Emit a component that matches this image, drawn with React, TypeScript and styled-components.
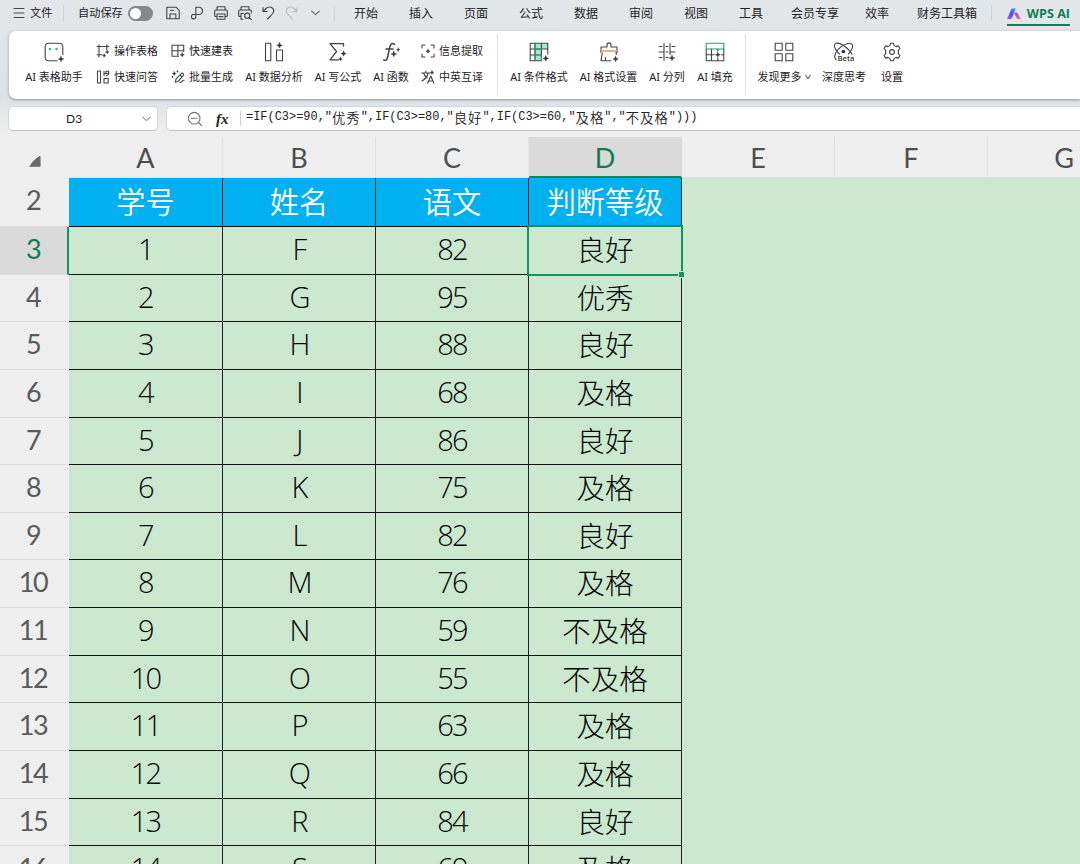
import React from 'react';
import styled, { createGlobalStyle } from 'styled-components';

const GlobalStyle = createGlobalStyle`
  * { box-sizing: border-box; }
  body {
    margin: 0;
    overflow: hidden;
    background: #efefef;
    font-family: "Noto Sans", "Noto Sans CJK SC", sans-serif;
    color: #1f2226;
  }
`;

const Window = styled.div`
  width: 1080px;
  height: 864px;
  overflow: hidden;
  display: flex;
  flex-direction: column;
  background: #efefef;
`;

const Chrome = styled.header`
  flex: none;
  height: 137px;
  background: linear-gradient(#e3e7ea 0, #dfe3e6 100px, #efefef 134px);
`;

const MenuBar = styled.nav`
  display: flex;
  align-items: center;
  height: 31px;
  padding: 0 0 5px 13px;
  white-space: nowrap;
`;

const Spacer = styled.span<{ $w: number }>`
  flex: none;
  width: ${(p) => p.$w}px;
`;

const MenuText = styled.span<{ $w: number; $size?: number }>`
  flex: none;
  width: ${(p) => p.$w}px;
  padding-top: ${(p) => (p.$size ? 0 : 2)}px;
  font-size: ${(p) => p.$size ?? 12}px;
  line-height: 16px;
`;

const Toggle = styled.span`
  flex: none;
  width: 25px;
  height: 15px;
  padding: 2px;
  border-radius: 8px;
  background: #85888b;
`;

const Knob = styled.span`
  display: block;
  width: 11px;
  height: 11px;
  border-radius: 50%;
  background: #fff;
`;

const Divider = styled.span<{ $h: number }>`
  flex: none;
  width: 1px;
  height: ${(p) => p.$h}px;
  background: #cdd1d4;
`;

const AiTab = styled.span`
  flex: none;
  display: flex;
  align-items: center;
  justify-content: space-between;
  width: 63px;
  height: 22px;
  margin-top: 4px;
  border-bottom: 2px solid #0f7f56;
  color: #0f7f56;
  font: bold 12.6px/18px "Open Sans", sans-serif;
`;

const Ribbon = styled.section`
  display: flex;
  align-items: flex-start;
  height: 68px;
  margin-left: 9px;
  padding: 11px 0 0 11px;
  background: #fff;
  border-radius: 7px 0 0 7px;
  box-shadow: 0 1px 3px rgba(60, 70, 80, 0.5);
  font-size: 11px;
  line-height: 14px;
  white-space: nowrap;
`;

const BigButton = styled.div<{ $w: number }>`
  flex: none;
  width: ${(p) => p.$w}px;
  height: 42px;
  display: flex;
  flex-direction: column;
  align-items: center;
  justify-content: space-between;
`;

const ButtonLabel = styled.span`
  display: flex;
  align-items: center;
  white-space: pre;
`;

const ButtonStack = styled.div<{ $w: number }>`
  flex: none;
  width: ${(p) => p.$w}px;
  display: flex;
  flex-direction: column;
  gap: 12px;
  padding-top: 2px;
`;

const SmallButton = styled.div`
  display: flex;
  align-items: center;
  gap: 4px;
  height: 14px;
`;

const GroupLine = styled.div<{ $ml: number; $mr: number }>`
  flex: none;
  width: 1px;
  height: 61px;
  margin: -8px ${(p) => p.$mr}px 0 ${(p) => p.$ml}px;
  background: #dcdcdc;
`;

const FormulaRow = styled.section`
  display: flex;
  gap: 8px;
  margin: 7px 0 0 8px;
  height: 25px;
`;

const NameBox = styled.div`
  display: flex;
  align-items: center;
  width: 150px;
  padding: 0 6px 0 57px;
  justify-content: space-between;
  background: #fff;
  border-radius: 5px;
  border: 1px solid #d3d6d8;
  border-bottom-color: #bfc1c3;
  font: 12px Lato, sans-serif;
`;

const FormulaBox = styled.div`
  flex: 1;
  display: flex;
  align-items: center;
  padding-left: 20px;
  background: #fff;
  border-radius: 5px 0 0 5px;
  border: 1px solid #d3d6d8;
  border-right: 0;
  border-bottom-color: #bfc1c3;
`;

const FxLabel = styled.span`
  width: 25px;
  padding-left: 1px;
  font: italic bold 15px/18px "Liberation Serif", serif;
`;

const Formula = styled.code`
  display: flex;
  align-items: center;
  margin-left: 5px;
  height: 20px;
  padding-bottom: 3px;
  font: 11.95px/20px "Liberation Mono", monospace;
  color: #222;
  white-space: pre;
`;

const FormulaHan = styled.span`
  font: 350 13.4px/18px "Noto Sans CJK SC", sans-serif;
  letter-spacing: 0.94px;
`;

const Sheet = styled.main`
  flex: 1;
  min-height: 0;
  display: flex;
  flex-direction: column;
  background: #cce8cf;
`;

const Line = styled.div<{ $h: number }>`
  flex: none;
  display: flex;
  height: ${(p) => p.$h}px;
`;

const Corner = styled.div`
  flex: none;
  width: 69px;
  padding: 13px 0 0 29px;
  background: #efefef;
`;

const ColumnHead = styled.div<{ $active: boolean }>`
  flex: none;
  width: 153px;
  border-right: 1px solid ${(p) => (p.$active ? '#dadada' : '#e2e2e2')};
  border-bottom: ${(p) => (p.$active ? '2px solid #12855b' : '1px solid #dfe3df')};
  background: ${(p) => (p.$active ? '#dadada' : '#efefef')};
  color: ${(p) => (p.$active ? '#107c52' : '#4d4f51')};
  font: 27px/42px Lato, sans-serif;
  text-align: center;

  &:nth-child(2) { width: 154px; }
`;

const RowHead = styled.div<{ $active: boolean }>`
  flex: none;
  width: 69px;
  padding-right: ${(p) => (p.$active ? 1 : 3)}px;
  background: ${(p) => (p.$active ? '#dadada' : '#efefef')};
  border-right: ${(p) => (p.$active ? '2px solid #179065' : '0')};
  border-bottom: 1px solid #dedede;
  color: ${(p) => (p.$active ? '#107c52' : '#5a5b5d')};
  font: 27px/44px Lato, sans-serif;
  letter-spacing: -1.5px;
  text-align: center;
`;

const Cell = styled.div<{ $title?: boolean }>`
  position: relative;
  flex: none;
  width: 153px;
  border-right: 1px solid #1c241e;
  border-bottom: 1px solid #111;
  background: ${(p) => (p.$title ? '#00b0f0' : '#cce8cf')};
  color: ${(p) => (p.$title ? '#fff' : '#050505')};
  font: ${(p) => (p.$title ? '350 29px/44px' : '300 29px/44px')} "Open Sans", "Noto Sans CJK SC", sans-serif;
  letter-spacing: ${(p) => (p.$title ? 0 : '-1.8px')};
  text-align: center;

  &:nth-child(2) { width: 154px; }
`;

const HanText = styled.span`
  font-family: "Noto Sans CJK SC", sans-serif;
  font-size: 28.6px;
  letter-spacing: 0;
`;

const TitleText = styled(HanText)`
  font-size: 29.2px;
`;

const Selection = styled.i`
  position: absolute;
  z-index: 1;
  inset: -2px;
  border: 2px solid #179065;
`;

const FillHandle = styled.i`
  position: absolute;
  z-index: 2;
  right: -4px;
  bottom: -4px;
  width: 7px;
  height: 7px;
  background: #179065;
  border: 1px solid #cce8cf;
`;

const Svg = ({ w, h, children, c = '#404347', sw = 1.1 }: {
  w: number; h: number; children: React.ReactNode; c?: string; sw?: number;
}) => (
  <svg width={w} height={h} viewBox={`0 0 ${w} ${h}`} fill="none" stroke={c} strokeWidth={sw}
    strokeLinecap="round" strokeLinejoin="round">
    {children}
  </svg>
);

const Spark = ({ x, y, r = 2.8 }: { x: number; y: number; r?: number }) => (
  <path
    d={`M${x} ${y - r}L${x + r * 0.3} ${y - r * 0.3}L${x + r} ${y}L${x + r * 0.3} ${y + r * 0.3}L${x} ${y + r}L${x - r * 0.3} ${y + r * 0.3}L${x - r} ${y}L${x - r * 0.3} ${y - r * 0.3}Z`}
    fill="#333" stroke="#333" strokeWidth="0.4"
  />
);

const Chevron = ({ w = 8, c = '#666' }: { w?: number; c?: string }) => (
  <Svg w={w} h={6} c={c}><path d={`M.7 1.2L${w / 2} 4.6L${w - 0.7} 1.2`} /></Svg>
);

const quickIcons = [
  <Svg w={14} h={14}><path d="M3 12.8H.8V1.2H10L13.2 4.4V12.8H3M4 12.5V8H9.8V12.5M4.5 4.2H7.5" /></Svg>,
  <Svg w={14} h={14}><path d="M5.8 8.5V1.2H9a3.6 3.6 0 0 1 0 7.3H3.3a2.2 2.2 0 1 0 2.5 2.3V8.5" /></Svg>,
  <Svg w={14} h={14}><path d="M3 4V.8H11V4M3 10.5H1.5Q.7 10.5 .7 9.5V5Q.7 4 1.7 4H12.3Q13.3 4 13.3 5V9.5Q13.3 10.5 12.5 10.5H11M3 8H11V13.2H3ZM5 10.6H9" /></Svg>,
  <Svg w={14} h={14}><path d="M3 4V.8H11V4M3 10.5H1.5Q.7 10.5 .7 9.5V5Q.7 4 1.7 4H12.3Q13.3 4 13.3 5V7M5 13.2H3V7.5H5.5M11 11.7L13.3 13.5" /><circle cx="9.2" cy="9.7" r="2.6" /></Svg>,
  <Svg w={13} h={14}><path d="M1 1.5V5.5H5.2M1.3 5.2L4 2.5C7-.3 11.7 1 11.7 5C11.7 7 10.7 8.2 5.5 13" /></Svg>,
  <Svg w={13} h={14} c="#b9bdc0"><path d="M12 1.5V5.5H7.8M11.7 5.2L9 2.5C6-.3 1.3 1 1.3 5C1.3 7 2.3 8.2 7.5 13" /></Svg>,
];

const AssistantIcon = () => (
  <Svg w={20} h={20}>
    <path d="M13 18.8H5Q1.2 18.8 1.2 15V5Q1.2 1.2 5 1.2H15Q18.8 1.2 18.8 5V12.5" />
    <circle cx="6" cy="7" r="1.3" fill="#48ad8a" stroke="none" />
    <circle cx="12.5" cy="7" r="1.3" fill="#48ad8a" stroke="none" />
    <Spark x={17} y={17} />
  </Svg>
);
const EditTableIcon = () => (
  <Svg w={14} h={14}><path d="M3 .8V13M1 2.5H13M10.8.8V5.5M1 10.8H6" /><Spark x={11.2} y={8} r={1.9} /><Spark x={8.2} y={11.6} r={1.7} /></Svg>
);
const AskIcon = () => (
  <Svg w={14} h={14}><path d="M1.5 1H4.5V13H1.5ZM8 8.5H12.2V13H8ZM8 1.2V5.8M8 3.5H10M12.7 3.5Q12.7 5 10.2 5.8M10 1.2H12.7V3.5H10Z" /></Svg>
);
const NewTableIcon = () => (
  <Svg w={14} h={14}><path d="M7.5 12.2H1V1.2H12.7V7.5M1 6.7H12.7M6.9 1.2V12.2" /><Spark x={11.2} y={10.8} r={2.1} /></Svg>
);
const BatchIcon = () => (
  <Svg w={14} h={14}><path d="M4.3 12.3L5 9.2L10.2 3.5Q11.2 2.7 12.2 3.6Q13.1 4.6 12.2 5.6L7 11.4ZM9 4.8L11 6.8M8.8 12.7C11 12.7 11 10.2 13 10.2" /><Spark x={3.2} y={3.6} r={1.9} /><Spark x={1.4} y={7} r={0.9} /><Spark x={6.5} y={1.5} r={0.9} /></Svg>
);
const AnalyzeIcon = () => (
  <Svg w={20} h={20}><path d="M1.5 1.2H6.8V18.8H1.5ZM12.5 8H18.5V18.8H12.5Z" /><Spark x={15.5} y={3.3} /></Svg>
);
const SumIcon = () => (
  <Svg w={20} h={20} sw={1.3}><path d="M15.5 4V1.7H2L8.5 9.5L2 17.8H10.5" /><Spark x={15.6} y={11.6} r={2.6} /><Spark x={12.5} y={17} r={1.9} /></Svg>
);
const FunctionIcon = () => (
  <Svg w={20} h={20} sw={1.5}><path d="M13.5 2.4C10.6.4 9.3 2.5 8.7 5.3L6.5 15.5Q5.6 19.3 2.7 18M5 7H12" /><Spark x={12.8} y={12} r={2.8} /><Spark x={17.2} y={7.7} r={1.8} /></Svg>
);
const ExtractIcon = () => (
  <Svg w={14} h={14}><path d="M1 4V1H4M10 1H13V4M13 10V13H10M4 13H1V10" /><Spark x={7} y={7.2} r={2.1} /></Svg>
);
const TranslateIcon = () => (
  <Svg w={14} h={14}><path d="M.8 3H8.8M4.8 1V3M7.3 3Q6 8 1 11M2.5 3Q3.5 6.3 6.2 8M6.7 13.2L9.8 6L12.9 13.2M7.8 11H11.8" /><Spark x={11} y={2.5} r={2} /></Svg>
);
const ConditionIcon = () => (
  <Svg w={20} h={20}>
    <path d="M6 1.2H18.5V7H13V13H12V18.8H6Z" fill="#a8e6cf" stroke="none" />
    <path d="M12.5 18.8H1.2V1.2H18.8V12M1.2 7H18.8M1.2 13H12.5M6 1.2V18.8M12.4 1.2V18.8" />
    <path d="M6 1.2V18.8M6 7H12.4M12.4 13V18.8" stroke="#20a273" />
    <Spark x={16.8} y={16.4} />
  </Svg>
);
const BrushIcon = () => (
  <Svg w={20} h={20}>
    <path d="M2 10.5V5H8V3Q8 .9 10 .9Q12 .9 12 3V5H18V10.5M3.3 11L2 18.7H12M6.5 18.5V15.5M17 10.5L17.4 12.5" />
    <path d="M2.2 9H17.8" stroke="#f09061" strokeWidth="1.6" /><Spark x={16.6} y={17} />
  </Svg>
);
const SplitIcon = () => (
  <Svg w={20} h={20}><path d="M7 1.5V18.5M13 1.5V12.5M2 4.5H5M9 4.5H11M15 4.5H18M2 10H7M9 10H11M13 10H18M2 15.5H5M9 15.5H11" /><Spark x={15} y={16} /></Svg>
);
const FillIcon = () => (
  <Svg w={20} h={20}><path d="M1.2 7V18.8H18.8V7M1.2 12.8H9M6.5 7V18.8M12.8 7V9M12.8 16V18.8M16.5 12.8H18.8" /><path d="M1.2 7V1.2H18.8V7Z" stroke="#20a273" /><Spark x={12.8} y={12.8} r={2.5} /></Svg>
);
const MoreIcon = () => (
  <Svg w={20} h={20}><path d="M1.2 1.2H8.2V8.2H1.2ZM11.8 1.2H18.8V8.2H11.8ZM1.2 11.8H8.2V18.8H1.2ZM11.8 11.8H18.8V18.8H11.8Z" /></Svg>
);
const ThinkIcon = () => (
  <Svg w={22} h={20}>
    <path d="M3 18Q-.3 13.5 5 7.7Q11.5 1 17 1.2Q22 2 17.8 9Q17 10.5 15.5 12M19 12.5Q18.5 10 12 4.5Q6 .5 3 1.3Q-1 3.5 5.2 10.8L6.5 12" />
    <circle cx="10.4" cy="9.5" r="1.8" fill="#333" stroke="none" />
    <text x="4.6" y="19.3" fill="#333" stroke="none" fontFamily="Open Sans, sans-serif" fontWeight="600" fontSize="7.6">Beta</text>
  </Svg>
);
const GearIcon = () => (
  <Svg w={20} h={20}><path d="M8 3.4L8.6 1.2H11.4L12 3.4L14 4.6L16.3 3.9L18 6.5L16.4 8.3V11.7L18 13.5L16.3 16.1L14 15.4L12 16.6L11.4 18.8H8.6L8 16.6L6 15.4L3.7 16.1L2 13.5L3.6 11.7V8.3L2 6.5L3.7 3.9L6 4.6Z" /><circle cx="10" cy="10" r="2.4" /></Svg>
);

const AiLogo = () => (
  <svg width="14" height="12" viewBox="0 0 14 12">
    <defs>
      <linearGradient id="aiBlue" x1="0" y1="1" x2="1" y2="0">
        <stop offset="0" stopColor="#b65cf3" /><stop offset=".5" stopColor="#514dfa" /><stop offset="1" stopColor="#32a4ff" />
      </linearGradient>
      <linearGradient id="aiPink" x1="0" y1="0" x2="1" y2="1">
        <stop offset="0" stopColor="#7845f5" /><stop offset="1" stopColor="#ff70a8" />
      </linearGradient>
    </defs>
    <path d="M4.6 .5H8.9L4.3 11H0Z" fill="url(#aiBlue)" />
    <path d="M7 4.8H10.3L14 11H10.2Z" fill="url(#aiPink)" />
  </svg>
);

const tabs: [string, number, number][] = [
  ['开始', 24, 31], ['插入', 24, 31], ['页面', 24, 31], ['公式', 24, 31], ['数据', 24, 31],
  ['审阅', 24, 31], ['视图', 24, 31], ['工具', 24, 28], ['会员专享', 48, 26], ['效率', 24, 28], ['财务工具箱', 60, 14],
];

const Big = ({ w, icon, label, menu }: { w: number; icon: React.ReactNode; label: string; menu?: boolean }) => (
  <BigButton $w={w}>
    {icon}
    <ButtonLabel>{label}{menu && <><Spacer $w={3} /><Chevron w={6} /></>}</ButtonLabel>
  </BigButton>
);

const Pair = ({ w, items }: { w: number; items: [React.ReactNode, string][] }) => (
  <ButtonStack $w={w}>
    {items.map(([icon, label]) => <SmallButton key={label}>{icon}{label}</SmallButton>)}
  </ButtonStack>
);

const formulaParts = ['=IF(C3>=90,"', '优秀', '",IF(C3>=80,"', '良好', '",IF(C3>=60,"', '及格', '","', '不及格', '")))'];
const columns = ['A', 'B', 'C', 'D', 'E', 'F', 'G'];
const scores: [string, number, string][] = [
  ['F', 82, '良好'], ['G', 95, '优秀'], ['H', 88, '良好'], ['I', 68, '及格'], ['J', 86, '良好'],
  ['K', 75, '及格'], ['L', 82, '良好'], ['M', 76, '及格'], ['N', 59, '不及格'], ['O', 55, '不及格'],
  ['P', 63, '及格'], ['Q', 66, '及格'], ['R', 84, '良好'], ['S', 69, '及格'],
];

export default function App() {
  return (
    <Window>
      <GlobalStyle />
      <Chrome>
        <MenuBar>
          <Svg w={12} h={12} c="#44474a"><path d="M1 1.5H11M1 6H11M1 10.5H11" /></Svg>
          <Spacer $w={5} />
          <MenuText $w={33} $size={11.2}>文件</MenuText>
          <Divider $h={15} />
          <Spacer $w={14} />
          <MenuText $w={50} $size={11.2}>自动保存</MenuText>
          <Toggle><Knob /></Toggle>
          <Spacer $w={13} />
          {quickIcons.map((icon, i) => <React.Fragment key={i}>{icon}<Spacer $w={10} /></React.Fragment>)}
          <Spacer $w={3} />
          <Chevron w={9} />
          <Spacer $w={14} />
          <Divider $h={15} />
          <Spacer $w={19} />
          {tabs.map(([label, w, gap]) => (
            <React.Fragment key={label}><MenuText $w={w}>{label}</MenuText><Spacer $w={gap} /></React.Fragment>
          ))}
          <Divider $h={15} />
          <Spacer $w={15} />
          <AiTab><AiLogo />WPS AI</AiTab>
        </MenuBar>
        <Ribbon>
          <Big w={68} icon={<AssistantIcon />} label="AI 表格助手" />
          <Spacer $w={8} />
          <Pair w={75} items={[[<EditTableIcon />, '操作表格'], [<AskIcon />, '快速问答']]} />
          <Pair w={69} items={[[<NewTableIcon />, '快速建表'], [<BatchIcon />, '批量生成']]} />
          <Big w={68} icon={<AnalyzeIcon />} label="AI 数据分析" />
          <Big w={60} icon={<SumIcon />} label="AI 写公式" />
          <Big w={46} icon={<FunctionIcon />} label="AI 函数" />
          <Spacer $w={7} />
          <Pair w={64} items={[[<ExtractIcon />, '信息提取'], [<TranslateIcon />, '中英互译']]} />
          <GroupLine $ml={12} $mr={6} />
          <Big w={70} icon={<ConditionIcon />} label="AI 条件格式" />
          <Big w={69} icon={<BrushIcon />} label="AI 格式设置" />
          <Big w={48} icon={<SplitIcon />} label="AI 分列" />
          <Big w={48} icon={<FillIcon />} label="AI 填充" />
          <GroupLine $ml={6} $mr={6} />
          <Big w={64} icon={<MoreIcon />} label="发现更多" menu />
          <Big w={56} icon={<ThinkIcon />} label="深度思考" />
          <Big w={40} icon={<GearIcon />} label="设置" />
        </Ribbon>
        <FormulaRow>
          <NameBox>D3<Chevron w={9} c="#999" /></NameBox>
          <FormulaBox>
            <Svg w={16} h={16} c="#777"><circle cx="7.2" cy="7.2" r="5.8" /><path d="M4.5 7.2H10M11.5 11.5L14.5 14.5" /></Svg>
            <Spacer $w={12} />
            <FxLabel>fx</FxLabel>
            <Divider $h={15} />
            <Formula>
              {formulaParts.map((part, i) => (i % 2 ? <FormulaHan key={i}>{part}</FormulaHan> : <span key={i}>{part}</span>))}
            </Formula>
          </FormulaBox>
        </FormulaRow>
      </Chrome>
      <Sheet>
        <Line $h={41}>
          <Corner><Svg w={12} h={12} c="#68696a"><path d="M1 11.2H11V1.5Q6.5 3.5 1 11.2Z" fill="#68696a" /></Svg></Corner>
          {columns.map((name) => <ColumnHead key={name} $active={name === 'D'}>{name}</ColumnHead>)}
        </Line>
        <Line $h={49}>
          <RowHead $active={false}>2</RowHead>
          {['学号', '姓名', '语文', '判断等级'].map((t) => <Cell key={t} $title><TitleText>{t}</TitleText></Cell>)}
        </Line>
        {scores.map(([name, score, grade], i) => (
          <Line key={name} $h={47.65}>
            <RowHead $active={i === 0}>{i + 3}</RowHead>
            <Cell>{i + 1}</Cell>
            <Cell>{name}</Cell>
            <Cell>{score}</Cell>
            <Cell>
              <HanText>{grade}</HanText>
              {i === 0 && <><Selection /><FillHandle /></>}
            </Cell>
          </Line>
        ))}
      </Sheet>
    </Window>
  );
}
